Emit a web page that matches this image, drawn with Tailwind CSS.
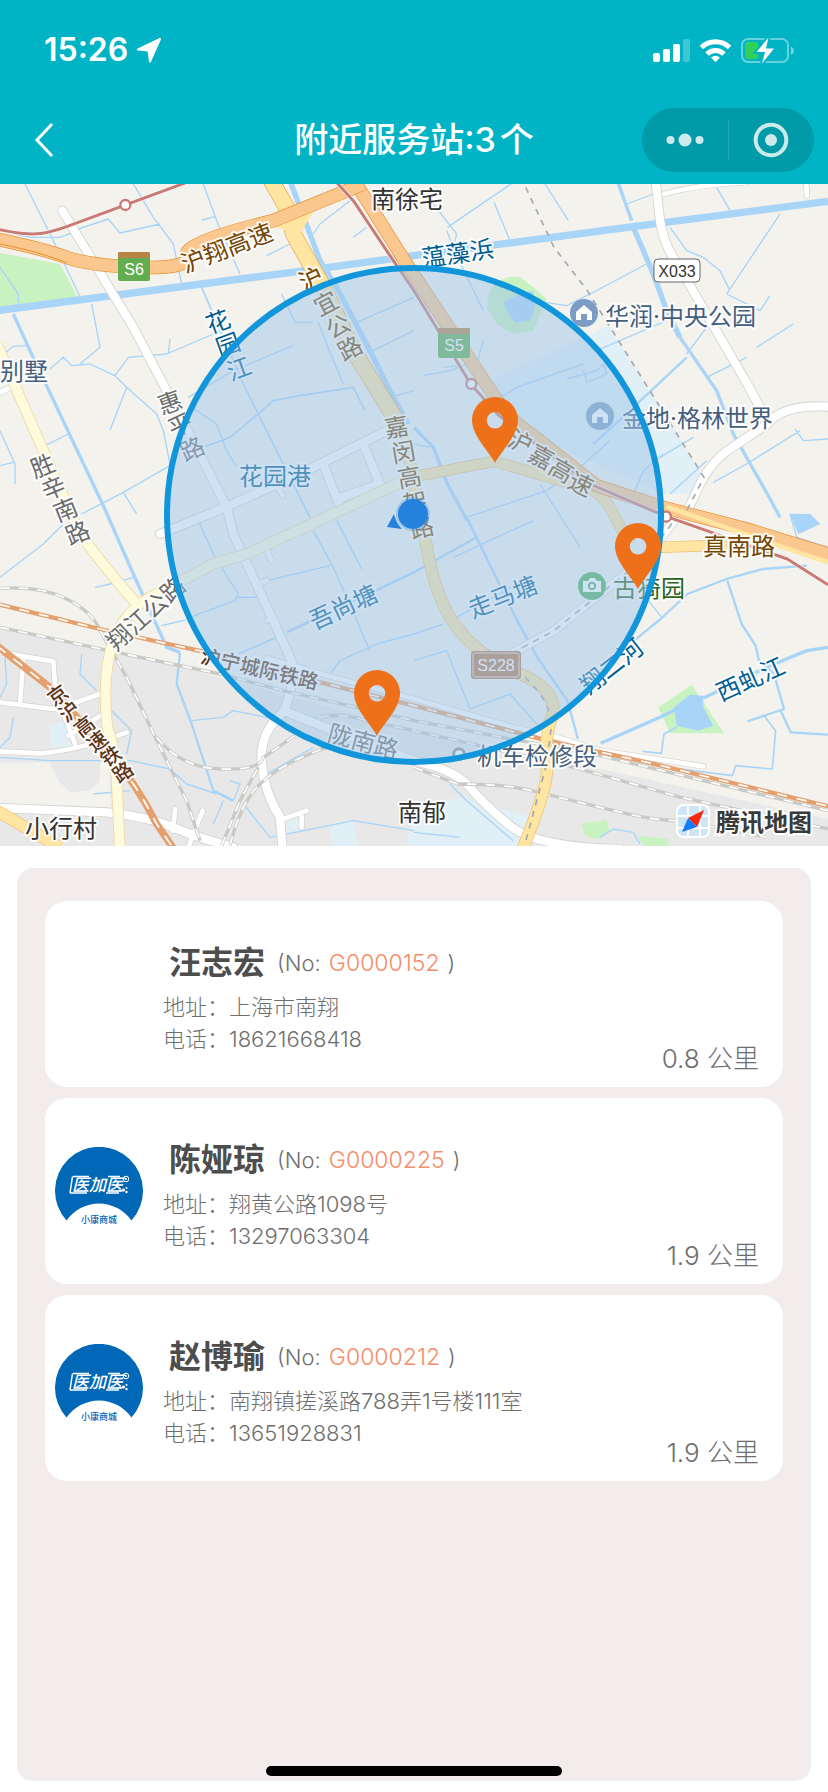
<!DOCTYPE html>
<html lang="zh-CN">
<head>
<meta charset="utf-8">
<meta name="viewport" content="width=device-width, initial-scale=1">
<title>附近服务站</title>
<script src="https://cdn.jsdelivr.net/npm/@tailwindcss/browser@4"></script>
</head>
<body class="bg-white">
<div class="relative flex min-h-screen flex-col font-['Inter','Noto_Sans_CJK_SC',sans-serif]">

  <header class="bg-[#00b4c6] text-white">
    <div class="flex h-24 items-center justify-between pt-1 pr-8 pl-11">
      <div class="flex items-center gap-2">
        <span class="text-[32px] leading-none font-semibold">15:26</span>
        <svg class="h-[26px] w-[26px]" viewBox="0 0 26 26" fill="#fff" stroke="#fff" stroke-width="2" stroke-linejoin="round"><path d="M24 2 2 12.500 12.500 13.500 14 24.500z"/></svg>
      </div>
      <svg class="h-[30px] w-[144px]" viewBox="652 34 144 30" fill="#fff">
        <rect x="653" y="52" width="7" height="9" rx="2"/><rect x="663" y="48" width="7" height="13" rx="2"/><rect x="673" y="43" width="7" height="18" rx="2"/><rect x="683" y="38" width="7" height="23" rx="2" opacity=".25"/>
        <g fill="none" stroke="#fff" stroke-width="5"><path d="M701.500 46.500a20 20 0 0 1 28 0"/><path d="M707 53a12 12 0 0 1 17 0"/></g>
        <path d="M711 56.500q4.500-3.500 9 0l-4.500 4.700z"/>
        <rect x="742" y="38" width="46" height="23" rx="6" fill="none" stroke="#fff" stroke-width="2" opacity=".4"/>
        <path d="M791 45.500v8.500q3-1.500 3-4.250t-3-4.250z" opacity=".45"/>
        <rect x="745" y="41" width="13.500" height="17" rx="3" fill="#30d158"/>
        <path d="M768.500 36.500 756.500 51h8.500l-3 11.500L774 47.500h-8z" stroke="#00b4c6" stroke-width="4" paint-order="stroke"/>
      </svg>
    </div>
    <div class="grid h-22 grid-cols-[1fr_auto_1fr] items-center px-3.5">
      <button type="button" aria-label="返回" class="ml-4.5 w-6">
        <svg class="h-9 w-6" viewBox="0 0 24 36" fill="none" stroke="#fff" stroke-width="3"><path d="M20 2 5 18l15 16"/></svg>
      </button>
      <h1 class="flex items-center gap-1 text-[34px] leading-none font-medium"><span>附近服务站:3</span><span>个</span></h1>
      <div class="flex h-16 w-[172px] items-center justify-self-end rounded-full bg-[#009aa8]">
        <button type="button" aria-label="更多" class="flex flex-1 justify-center">
          <svg class="h-4 w-10" viewBox="0 0 40 16" fill="#cce9ec"><circle cx="5.500" cy="8" r="4"/><circle cx="20" cy="8" r="6.500"/><circle cx="34.500" cy="8" r="4"/></svg>
        </button>
        <span class="h-10 w-px bg-white/15"></span>
        <button type="button" aria-label="关闭" class="flex flex-1 justify-center">
          <svg class="h-9 w-9" viewBox="0 0 36 36" fill="#cce9ec"><circle cx="18" cy="18" r="15.300" fill="none" stroke="#cce9ec" stroke-width="4"/><circle cx="18" cy="18" r="6"/></svg>
        </button>
      </div>
    </div>
  </header>

  <section aria-label="地图">
  <svg class="block h-auto w-full" viewBox="0 0 828 662" fill="none">
    <defs>
      <path id="pin" fill="#ee711a" fill-rule="evenodd" d="M0 0C-6-12-23-27-23-43A23 23 0 0 1 23-43C23-27 6-12 0 0zM0-51a8.300 8.300 0 1 0 .1 0z"/>
      <g id="house"><circle r="14" fill="#7b9cc4"/><path d="M-8-1 0-8 8-1V7H3V1H-3V7H-8z" fill="#fff"/></g>
      <path id="w1" d="M187 80 290 250 400 430 500 620 620 850 680 970 700 1050 870 1420Q890 1460 878 1490L855 1580Q780 1640 785 1730T840 1900L848 2000M480 1050 640 985 880 880 1160 740M970 840 1020 970M1090 780 1140 900 1010 945M1967-10 1980 110Q1990 180 2032 240L2242 600 2285 680M2067 970 2105 890Q2140 830 2182 800L2302 720Q2350 660 2484 668"/>
      <path id="w2" d="M850 1580 1000 1640 1242 1730Q1370 1760 1410 1810T1530 1925 1860 1995M0 1872 320 1885Q450 1900 520 1930T700 1990"/>
      <path id="w3" d="M800 1422 1000 1480 1242 1545 1542 1630 1672 1660 1802 1700 2110 1747M0 1555 160 1575H185L225 1680M0 1405 160 1432 170 1570M70 1420 60 1560M215 1560 300 1530M0 1702 120 1708Q230 1700 380 1645M205 1655 310 1590M518 1940 526 1875M565 1990 608 1880M850 1905 920 1880M905 1885V1930M1992 30Q2100 0 2240-5M2418-10 2421 35M800 1095 815 1130M770 1200 800 1190M800 1310 815 1300M830 905 848 935M0 625 30 612"/>
      <path id="y1" d="M-10 480 130 800 200 960 240 1050Q330 1170 412 1262M360 2000 350 1790Q345 1690 322 1630 305 1470 340 1370 380 1270 470 1230L640 1140 740 1110 1010 985 1242 875"/>
      <path id="y2" d="M1230 880 1482 832 1770 915Q1820 940 1845 1000L1890 1080M1980 1090 2180 1083"/>
      <path id="y3" d="M1180 690Q1230 790 1245 930L1272 1040Q1300 1240 1370 1330T1560 1470 1655 1600 1640 1740 1565 2000M-10 1880 180 1990"/>
      <path id="y4" d="M808-20 865 80 880 150 970 310 1060 500 1190 710"/>
      <path id="o1" d="M-10 165Q130 195 200 220T420 250 560 215 820 110L1090 0"/>
      <path id="o2" d="M1050-30 1220 240 1392 500 1492 650Q1530 710 1600 755L1790 905 1990 970 2240 1035 2500 1115"/>
      <path id="r1" d="M0 1330 350 1405 660 1470 850 1520 1242 1610 1800 1715 2484 1880M0 1213Q120 1205 200 1245T300 1340L380 1480 480 1690 560 1850 600 1970M470 1660Q540 1750 660 1755T790 1720L885 1655M665 1985 720 1850 775 1750M690 1985Q720 1860 780 1800T980 1690M960 1600Q1020 1585 1100 1610L1242 1640 1592 1720 1722 1750 2042 1840 2484 1935M1242 1750 1372 1800Q1500 1800 1572 1815L1842 1880Q1960 1910 2042 1910L2300 1960"/>
      <path id="r2" d="M0 1262 300 1335 620 1405 960 1495 1242 1565 1642 1670 1942 1735 2490 1868"/>
      <path id="r3" d="M-10 1385 150 1510 330 1710 400 1800Q440 1860 470 1920L525 2000"/>
      <path id="s1" d="M1532 1410 1662 1340 1762 1260 1882 1165 1962 1090 2045 980"/>
    </defs>
    <rect width="828" height="662" fill="#f3f2ec"/>
    <g transform="scale(.33333)" stroke-linejoin="round">
      <g>
        <path fill="#e8e8e8" d="M0 1325 350 1400 660 1480 1240 1640 1800 1755 2484 1905V1986H0z"/>
        <path fill="#f3f2ec" d="M0 1735H325L335 1880 0 1860z"/>
        <path fill="#e8e8e8" d="M150 1735H300V1790L270 1820 210 1825 175 1790z"/>
        <path fill="#c8f2c0" d="M0 207 180 240 232 338 0 370z"/>
        <path fill="#e1eff6" d="M1470 590 1825 425 2112 880 2070 930H1990L1540 730zM145 1625 195 1612 215 1690 155 1690zM860 1910 900 1900V1940L860 1945zM985 1930 1060 1910 1075 1986H1000zM1242 1870 1380 1840 1600 1900 1570 1986H1220z"/>
        <path fill="#c8f2c0" d="M1470 320Q1500 270 1560 280L1600 310 1640 345 1600 440 1540 450 1490 420 1460 370zM1975 1570 2075 1503 2172 1648H2010zM1745 1920 1820 1908 1828 1940 1790 1965 1755 1955zM1915 1955 2005 1965V1986H1930z"/>
        <path fill="#a8d4f8" d="M1510 355 1560 330 1600 320 1605 370 1590 410 1545 415 1520 380zM2022 1570 2070 1532 2110 1535V1570L2140 1625 2095 1640 2030 1625z"/>
      </g>
      <g stroke="#a8d4f8">
        <path stroke-width="22" d="M-10 380 720 285 900 262 1242 215 1882 130 2484 52"/>
        <path stroke-width="16" d="M870-10 960 230 1010 310 1110 500 1180 640 1225 720M1900 130 1960 270 2000 380 2040 460"/>
        <path stroke-width="10" d="M40 390 90 500 310 965 400 1170 500 1390 540 1405M1242 730 1300 790 1342 900 1402 1010M1852-10 1895 110M2040 460 2150 620 2200 750 2302 930 2340 1000M1802 1678 1980 1600 2060 1560M2110 1543 2300 1450 2420 1400 2484 1390"/>
        <path stroke-width="7" d="M2060 520 1900 670 1780 780M1902 1370 1982 1305 2062 1230 2180 1185 2290 1155 2420 1145M1400 1000 1552 1310 1612 1420 1702 1550 1734 1665M540 1405 530 1500 575 1620 640 1820 700 1850M1242 1165 1430 1060M860 1345 1242 1165M2182 1190 2225 1320 2267 1385 2277 1430 2322 1470 2352 1575 2242 1612M2342 1580 2372 1645 2484 1652"/>
        <path stroke-width="5" d="M605 310 730 600 860 860 930 1000M780 685 690 760 610 790M780 685 820 650 900 635 1060 610 1095 680M715 1410 830 1360M2292 1595 2327 1640 2317 1755 2207 1745 2197 1775 2040 1755M2030 1630 1992 1650 1984 1708 1927 1702"/>
        <path stroke-width="4" d="M75 0 160 170 240 338M400 0 460 100 520 180 545 300M235 135 325 105 360 147 480 120M610 0 650 110 720 270M605 108 645 98M0 140 90 160 180 160 235 140M0 250 55 330 55 360M150 555 190 520 215 545 270 540 345 575 385 520 500 510 640 450M505 510 510 465M345 575 380 610 470 690 490 740 510 840M380 610 330 738M275 360 300 490 240 540M0 520 40 487 80 485M135 785 205 750M0 740 45 840 45 900M0 845 40 835M245 990 370 925 510 845M370 925 410 990M565 640 700 560 885 483M845 330 885 415 940 415M955 415 980 480 1030 600M800 215 870 180M940 150 960 120 1050 50M1060 160 1100 130M1070 415 1242 340M1120 500 1242 440M1170 640 1242 620M575 670 650 720 680 800 710 850M320 990 410 1190M0 1180 130 1080 190 1020M285 1210 330 1200 400 1180M485 1325 555 1308M570 1300 705 1250 715 1230 670 1160 645 1120 590 1000M710 1240 780 1240M800 1190 990 1145M940 1040 1000 1150 1110 1400M1010 1010 1085 1155M990 1470 1020 1430 1130 1380 1242 1350M245 1410 240 1470 290 1520M335 1580 395 1640 380 1710M575 1610 670 1600 700 1580 800 1600 950 1600M0 1720 150 1730 390 1730 510 1755 560 1800 650 1830M280 1830 390 1820M640 1920 670 1850M730 1860 810 1960 1060 1910 1242 1940M700 1850 720 1800 690 1790M800 1770 940 1690M15 1420 20 1500 0 1540M40 1600 30 1660 0 1690M1342 130 1540-5M1370 150 1360 190M1482 55 1530 170M1340 140 1382 240 1450 380M1300 60 1370 150M1635 0 1705 110M1880 60 1960 30M2150 10 2190 80M2340 90 2180 330M2010 130 2060 200 2110 220 2160 260 2190 320M2180 330 2280 380 2310 335M1600 350 1700 365 1770 330 1940 240M1790 500 2000 410M2120 580 2240 520M2270 490 2380 420M2060 510 2120 430M2140 895 2240 840 2320 790 2400 740M2385 735 2410 770 2484 765M2010 930 2120 830M1980 820 2080 760M1470 660 1550 610 1750 540M1700 585 1790 560 1810 540 1820 570 1760 595 1750 560M1900 930 1930 860 1990 810M1400 1000 1640 920 1740 850 1830 770M1620 900 1740 1090M1242 780 1290 790M1270 575 1350 560 1400 540M1450 470 1430 540 1330 550M1360 1120 1600 1010M1370 1300 1480 1240 1600 1170M1242 1430 1340 1400 1410 1575 1530 1530 1610 1620M1242 1350 1330 1320M1945 1250 1985 1300M1350 1800 1400 1850 1540 1970M1242 1945 1380 1960M1800 1960 1840 1935 1900 1945 1920 1980M2370 990 2390 1060 2484 1090"/>
        <path fill="#a8d4f8" d="M2370 990 2430 990 2460 1020 2395 1050z"/>
      </g>
      <g stroke-linecap="round">
        <g stroke="#d2d2d0"><use href="#w1" stroke-width="30"/><use href="#w2" stroke-width="30"/><use href="#w3" stroke-width="18"/><use href="#s1" stroke-width="28"/></g>
        <g stroke="#fff"><use href="#w1" stroke-width="25"/><use href="#w2" stroke-width="25"/><use href="#w3" stroke-width="14"/><use href="#s1" stroke-width="24"/></g>
      </g>
      <use href="#s1" stroke="#aaaab4" stroke-width="5" stroke-dasharray="20 18"/>
      <use href="#r1" stroke="#c9c9c5" stroke-width="10"/><use href="#r1" stroke="#fff" stroke-width="5" stroke-dasharray="28 28"/>
      <use href="#r2" stroke="#e5a06f" stroke-width="13"/><use href="#r2" stroke="#fff" stroke-width="5" stroke-dasharray="30 30"/>
      <use href="#r3" stroke="#e5a06f" stroke-width="22"/><use href="#r3" stroke="#fff" stroke-width="5" stroke-dasharray="34 30"/>
      <use href="#y1" stroke="#efd7a6" stroke-width="34"/><use href="#y1" stroke="#fefbdc" stroke-width="29"/>
      <use href="#y2" stroke="#efbd70" stroke-width="34"/><use href="#y2" stroke="#fee5a2" stroke-width="30"/>
      <use href="#y3" stroke="#efbd70" stroke-width="37"/><use href="#y3" stroke="#fee5a2" stroke-width="33"/>
      <use href="#y4" stroke="#efa24c" stroke-width="50"/><use href="#y4" stroke="#fee5a2" stroke-width="46"/>
      <path d="M790 120 860 70 950 65 900 150z" fill="#fee5a2"/>
      <use href="#o2" stroke="#e88f32" stroke-width="40"/><use href="#o2" stroke="#fac88e" stroke-width="36"/>
      <use href="#o1" stroke="#e88f32" stroke-width="41"/><use href="#o1" stroke="#fac88e" stroke-width="37"/>
      <path d="M-10 178Q110 200 200 236" stroke="#e88f32" stroke-width="3"/>
      <path d="M2000 968 2240 1053 2484 1135" stroke="#fee5a2" stroke-width="14"/>
      <path d="M1575 1480Q1650 1550 1655 1620L1640 1740 1575 1980M1577 10 1662 190 1762 320 2112 880 2060 980" stroke="#a7a7b0" stroke-width="5" stroke-dasharray="18 18"/>
      <path d="M-10 135Q60 150 100 150T200 128L560-5M1005-10 1060 50 1180 230 1242 320 1412 600 1492 690Q1600 780 1782 905L1992 995 2362 1125 2484 1202" stroke="#fff" stroke-width="12"/>
      <path d="M-10 135Q60 150 100 150T200 128L560-5M1005-10 1060 50 1180 230 1242 320 1412 600 1492 690Q1600 780 1782 905L1992 995 2362 1125 2484 1202" stroke="#c87a74" stroke-width="9"/>
      <g fill="#fff" stroke="#c87a74" stroke-width="7"><circle cx="376" cy="63" r="15"/><circle cx="1414" cy="600" r="15"/><circle cx="1998" cy="998" r="15"/></g>
      <circle cx="1377" cy="1710" r="16" stroke="#8b8b90" stroke-width="9" fill="#fff"/>
    </g>

    <g class="text-[24px] font-normal" stroke-width="4" stroke="#fff" stroke-opacity=".85" stroke-linejoin="round" paint-order="stroke" text-anchor="middle">
      <g fill="#333" text-anchor="start">
        <text x="371" y="24">南徐宅</text><text x="398" y="637">南郁</text><text x="25" y="653">小行村</text>
      </g>
      <g fill="#44607c" text-anchor="start">
        <text x="0" y="196">别墅</text><text x="605" y="141">华润·中央公园</text><text x="622" y="243">金地·格林世界</text><text x="477" y="581">机车检修段</text>
      </g>
      <g fill="#734500">
        <text transform="translate(230 72) rotate(-21)">沪翔高速</text>
        <text transform="translate(315 103) rotate(-25)">沪</text><text transform="translate(330 127) rotate(-28)">宜</text><text transform="translate(342 150) rotate(-28)">公</text><text transform="translate(354 172) rotate(-28)">路</text>
        <text transform="translate(398 252) rotate(-10)">嘉</text><text transform="translate(405 277) rotate(-10)">闵</text><text transform="translate(411 302) rotate(-10)">高</text><text transform="translate(417 327) rotate(-12)">架</text><text transform="translate(424 352) rotate(-14)">路</text>
        <text transform="translate(517 266) rotate(24)">沪</text><text transform="translate(537 281) rotate(28)">嘉</text><text transform="translate(557 294) rotate(30)">高</text><text transform="translate(577 308) rotate(26)">速</text>
        <text x="739" y="371">真南路</text>
      </g>
      <text x="649" y="413" fill="#2b6418">古猗园</text>
      <g fill="#005c8f">
        <text transform="translate(221 146) rotate(-20)">花</text><text transform="translate(231 169) rotate(-20)">园</text><text transform="translate(242 193) rotate(-20)">江</text>
        <text x="275" y="301">花园港</text>
        <text transform="translate(459 78) rotate(-8)">蕰藻浜</text>
        <text transform="translate(506 421) rotate(-22)">走马塘</text>
        <text transform="translate(347 431) rotate(-25)">吾尚塘</text>
        <text transform="translate(617 489) rotate(-38)">翔二河</text>
        <text transform="translate(754 503) rotate(-24)">西虬江</text>
      </g>
      <g fill="#6b6b6b">
        <text transform="translate(173 227) rotate(-20)">惠</text><text transform="translate(184 249) rotate(-25)">平</text><text transform="translate(196 273) rotate(-25)">路</text>
        <text transform="translate(46 290) rotate(-22)">胜</text><text transform="translate(57 312) rotate(-22)">辛</text><text transform="translate(69 334) rotate(-22)">南</text><text transform="translate(81 357) rotate(-22)">路</text>
        <text transform="translate(152 436) rotate(-42)">翔江公路</text>
        <text transform="translate(361 566) rotate(15)">陇南路</text>
      </g>
      <g class="text-[20px] font-medium" fill="#5a3418">
        <text transform="translate(258 492) rotate(13)">沪宁城际铁路</text>
        <text transform="translate(62 517) rotate(-36)">京</text><text transform="translate(74 533) rotate(-38)">沪</text><text transform="translate(89 548) rotate(-38)">高</text><text transform="translate(102 563) rotate(-38)">速</text><text transform="translate(115 578) rotate(-35)">铁</text><text transform="translate(127 594) rotate(-35)">路</text>
      </g>
    </g>

    <g class="font-['Liberation_Sans',sans-serif] text-[16px]" text-anchor="middle">
      <rect x="118" y="68" width="32" height="29" rx="2" fill="#63ac4f"/><path d="M118 74v-4q0-2 2-2h28q2 0 2 2v4z" fill="#b98545"/><text x="134" y="91" fill="#fff">S6</text>
      <rect x="438" y="144" width="32" height="30" rx="2" fill="#63ac4f"/><path d="M438 150v-4q0-2 2-2h28q2 0 2 2v4z" fill="#b98545"/><text x="454" y="167" fill="#fff">S5</text>
      <rect x="654" y="75" width="46" height="23" rx="4" fill="#fff" stroke="#666"/><text x="677" y="93" fill="#333">X033</text>
      <rect x="471" y="467" width="50" height="28" rx="3" fill="#b87a50"/><rect x="473" y="469" width="46" height="24" rx="2" stroke="#e8d6c8"/><text x="496" y="487" fill="#fff">S228</text>
    </g>
    <use href="#house" x="584" y="129"/><use href="#house" x="600" y="232"/>
    <circle cx="592" cy="402" r="14" fill="#4fae5f"/><path d="M583 397h5l2-3h5l2 3h4v11h-18z" fill="#fff"/><circle cx="592" cy="402" r="3.200" stroke="#4fae5f" stroke-width="2"/>

    <circle cx="414" cy="331" r="247" fill="#9fc6ea" fill-opacity=".5" stroke="#1296db" stroke-width="6"/>
    <g fill="#2582dc"><circle cx="413" cy="330" r="17" opacity=".25"/><circle cx="413" cy="330" r="15"/><path d="M387 343 394 330Q396 339 402 345z"/></g>
    <use href="#pin" x="495" y="279"/><use href="#pin" x="638" y="405"/><use href="#pin" x="377" y="552"/>

    <rect x="676" y="620" width="34" height="34" rx="7" fill="#fff"/><rect x="678" y="622" width="30" height="30" rx="6" fill="#cfe4f7"/>
    <path d="M688 622v30M700 622v30M678 632h30M678 644h30" stroke="#fff" stroke-width="2"/>
    <path d="M704 626 697 643 688 634z" fill="#f5290c"/><path d="M682 648 688 634 697 643z" fill="#147dfa"/>
    <text x="716" y="647" class="text-[24px] font-bold" fill="#3a3a3a" stroke="#fff" stroke-width="4" paint-order="stroke">腾讯地图</text>
  </svg>
  </section>

  <main class="mx-[17px] mt-[22px] mb-[11px] flex-1 rounded-2xl bg-[#f2ecec] px-7 pt-[33px] pb-8">
    <svg class="hidden">
      <symbol id="brand" viewBox="0 0 88 88">
        <path fill="#0068b7" d="M11.500 73.500A44 44 0 1 1 76.500 73.500A39.600 39.600 0 0 0 11.500 73.500z"/>
        <text x="17" y="44" font-size="17" font-style="italic" font-weight="500" fill="#fff">医加医</text>
        <path d="M18 29.500h16M53 29.500h12M15 46h17M51 46h13M17.500 29.500 15 46" stroke="#fff" stroke-width="1.500" fill="none"/>
        <circle cx="71" cy="32" r="2.800" fill="none" stroke="#fff"/><circle cx="71" cy="32" r="1" fill="#fff"/><circle cx="68.500" cy="43" r="1.600" fill="#fff"/><circle cx="71.500" cy="41" r="1" fill="#fff"/><circle cx="71.500" cy="45" r="1.200" fill="#fff"/>
        <text x="44" y="76" font-size="9" font-weight="500" fill="#0068b7" text-anchor="middle">小康商城</text>
      </symbol>
    </svg>
    <ul class="flex flex-col gap-[11px] text-[22px] leading-8 font-light text-[#6e6e6e]">
      <li class="flex h-[186px] items-center rounded-[22px] bg-white pr-6 pl-2.5">
        <div class="h-22 w-22 shrink-0"></div>
        <div class="ml-5 flex-1 pt-0.5">
          <div class="flex h-14 items-center pl-1.5"><h2 class="mr-3 text-[32px] font-bold text-[#4d4d4d]">汪志宏</h2><p>(No: <span class="mr-2 ml-0.5 text-[23px] text-[#f78c69]">G0000152</span>)</p></div>
          <p>地址：上海市南翔</p>
          <p>电话：18621668418</p>
        </div>
        <p class="mb-3 self-end text-[26px]">0.8 公里</p>
      </li>
      <li class="flex h-[186px] items-center rounded-[22px] bg-white pr-6 pl-2.5">
        <svg class="h-22 w-22 shrink-0" role="img" aria-label="医加医 小康商城"><use href="#brand"/></svg>
        <div class="ml-5 flex-1 pt-0.5">
          <div class="flex h-14 items-center pl-1.5"><h2 class="mr-3 text-[32px] font-bold text-[#4d4d4d]">陈娅琼</h2><p>(No: <span class="mr-2 ml-0.5 text-[23px] text-[#f78c69]">G0000225</span>)</p></div>
          <p>地址：翔黄公路1098号</p>
          <p>电话：13297063304</p>
        </div>
        <p class="mb-3 self-end text-[26px]">1.9 公里</p>
      </li>
      <li class="flex h-[186px] items-center rounded-[22px] bg-white pr-6 pl-2.5">
        <svg class="h-22 w-22 shrink-0" role="img" aria-label="医加医 小康商城"><use href="#brand"/></svg>
        <div class="ml-5 flex-1 pt-0.5">
          <div class="flex h-14 items-center pl-1.5"><h2 class="mr-3 text-[32px] font-bold text-[#4d4d4d]">赵博瑜</h2><p>(No: <span class="mr-2 ml-0.5 text-[23px] text-[#f78c69]">G0000212</span>)</p></div>
          <p>地址：南翔镇搓溪路788弄1号楼111室</p>
          <p>电话：13651928831</p>
        </div>
        <p class="mb-3 self-end text-[26px]">1.9 公里</p>
      </li>
    </ul>
  </main>
  <div class="absolute bottom-4 left-1/2 h-2.5 w-[296px] -translate-x-1/2 rounded-full bg-black"></div>
</div>
</body>
</html>
